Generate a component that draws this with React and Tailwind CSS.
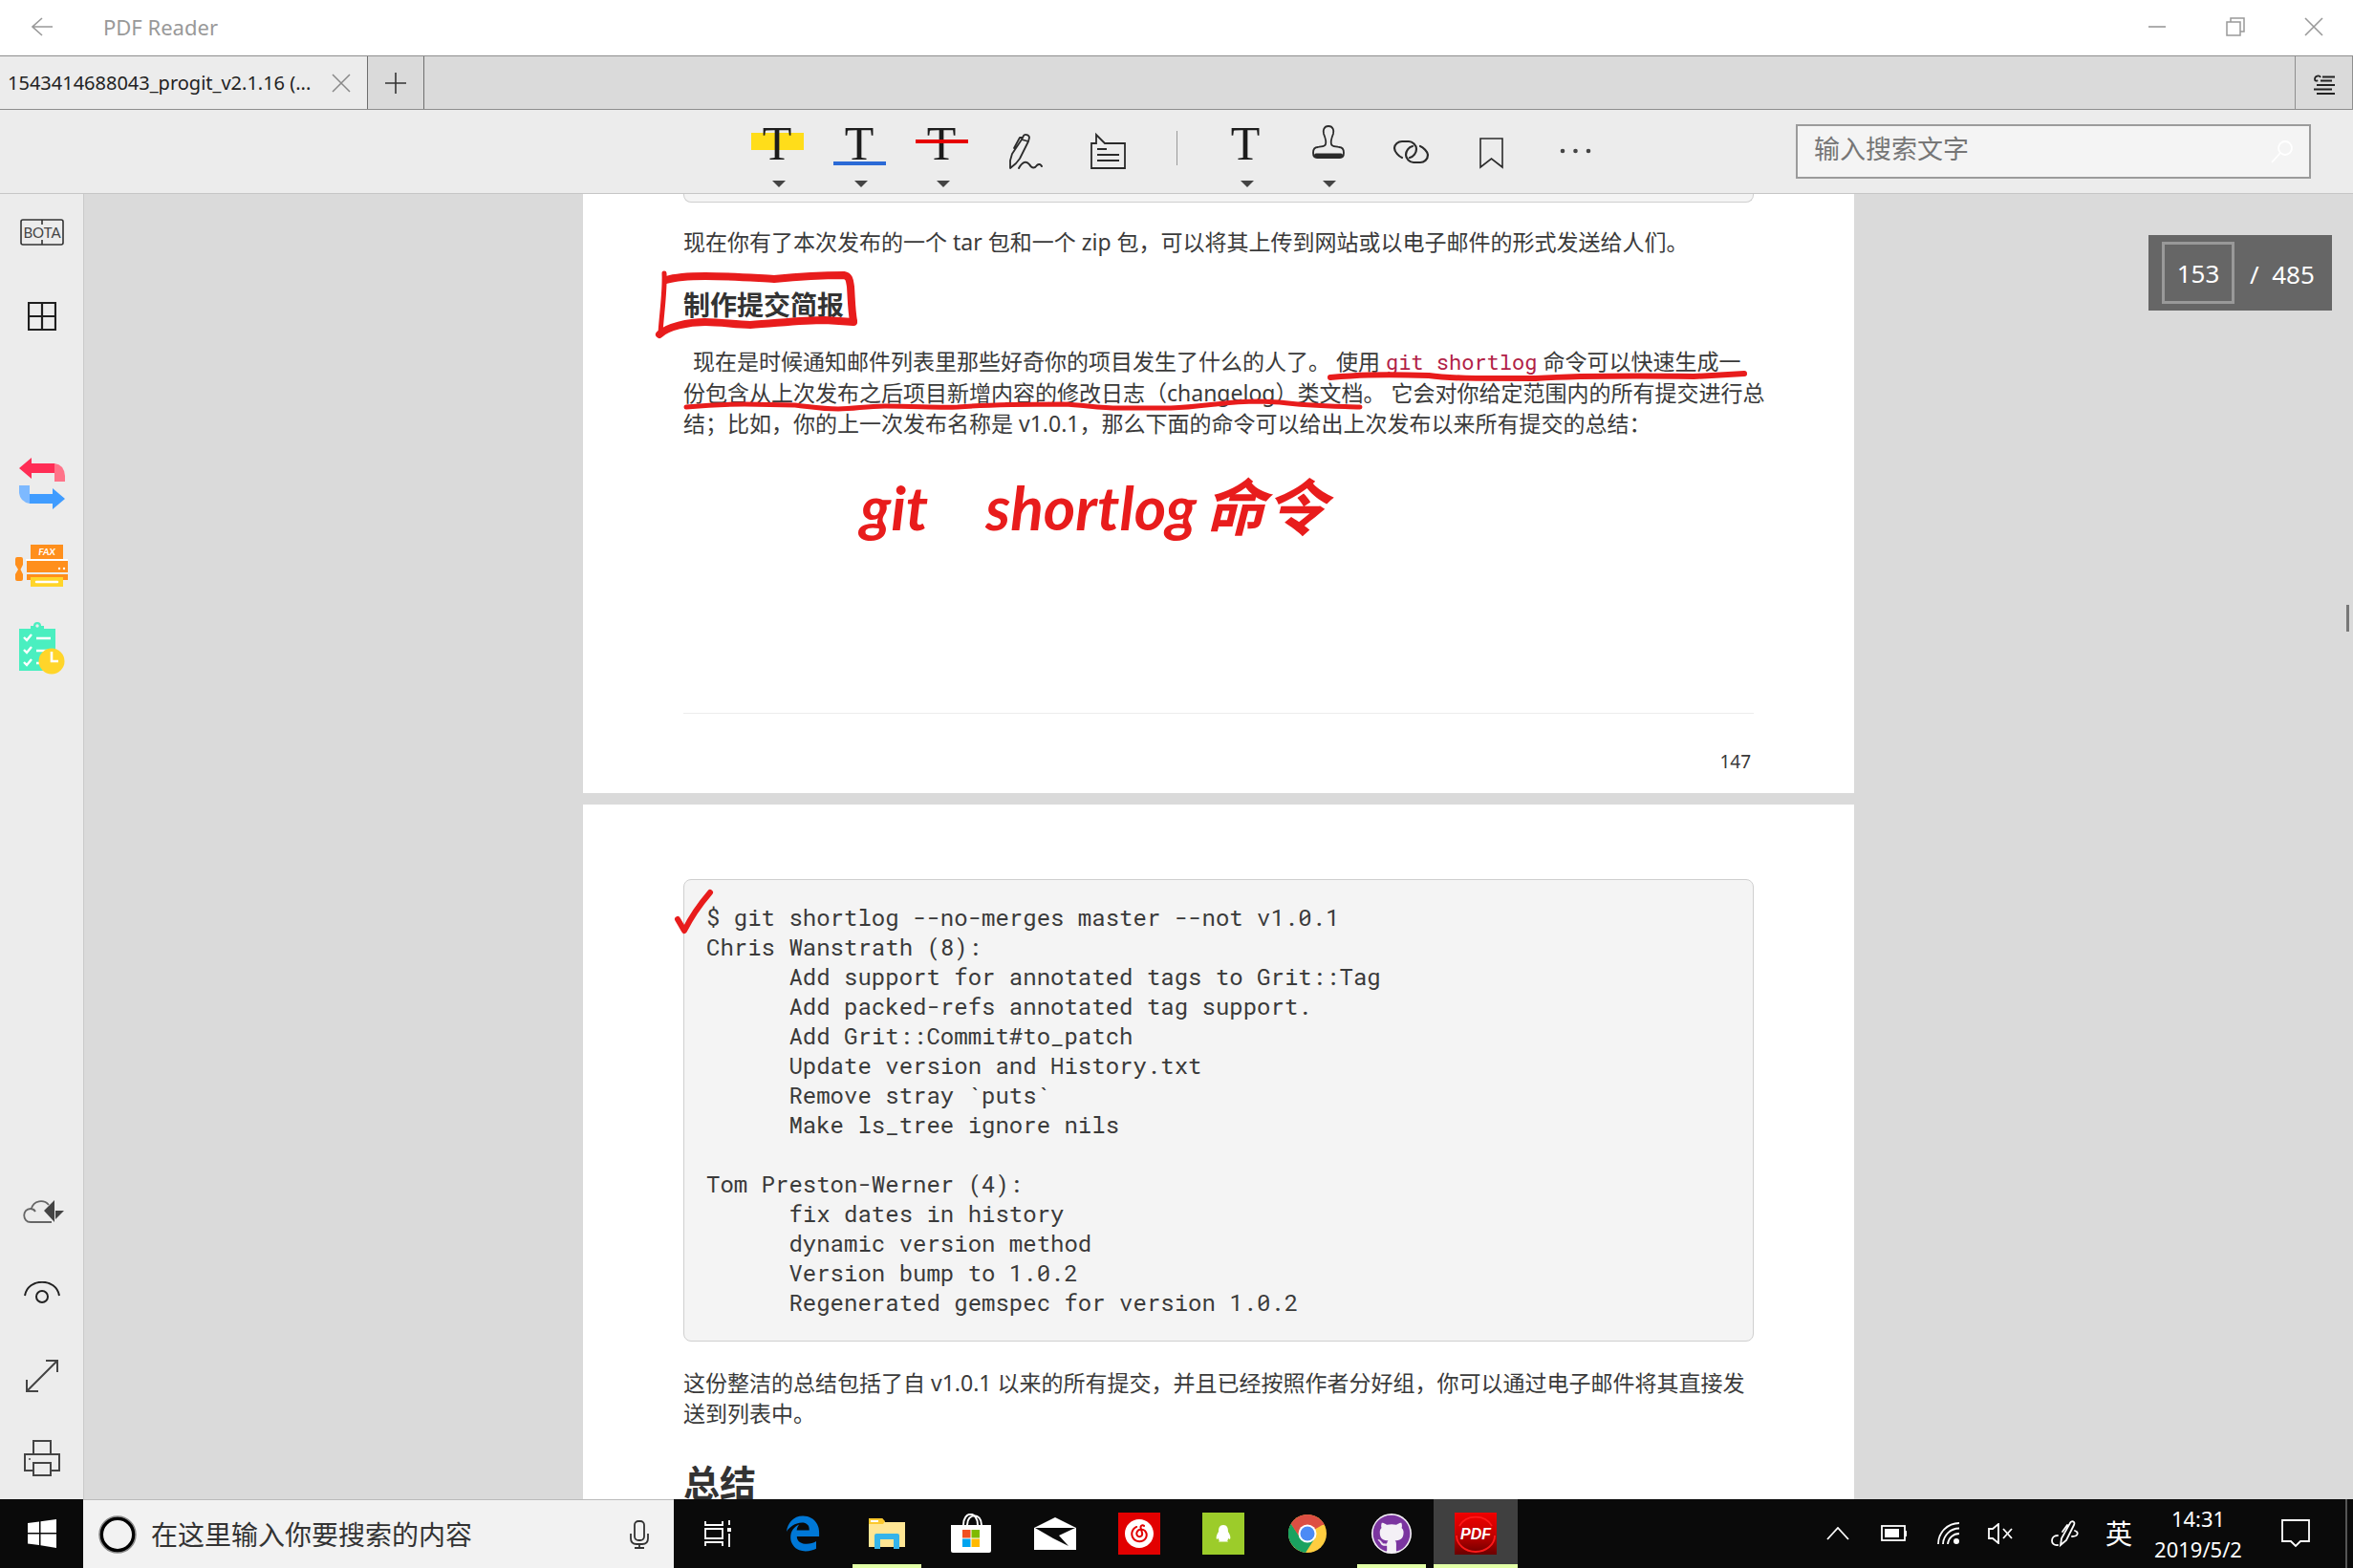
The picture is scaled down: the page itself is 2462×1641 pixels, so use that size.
import React from "react";
import { FaGithub } from "react-icons/fa";
import { FaEdgeLegacy } from "react-icons/fa6";
import { SiNeteasecloudmusic } from "react-icons/si";

const INK = "#e81c1c";

const shortlog = `$ git shortlog --no-merges master --not v1.0.1
Chris Wanstrath (8):
      Add support for annotated tags to Grit::Tag
      Add packed-refs annotated tag support.
      Add Grit::Commit#to_patch
      Update version and History.txt
      Remove stray \`puts\`
      Make ls_tree ignore nils

Tom Preston-Werner (4):
      fix dates in history
      dynamic version method
      Version bump to 1.0.2
      Regenerated gemspec for version 1.0.2`;

function TitleBar() {
  return (
    <header className="flex h-[59px] shrink-0 items-center border-b border-[#8e8e8e] bg-white pb-0.5 text-[#999]">
      <button aria-label="返回" className="flex h-full w-[88px] items-center justify-center">
        <svg width="22" height="20" viewBox="0 0 22 20" fill="none" stroke="currentColor" strokeWidth="1.6">
          <path d="M11 1 L1 10 L11 19 M1 10 H22" />
        </svg>
      </button>
      <h1 className="pl-5 text-[22px] leading-8">PDF Reader</h1>
      <div className="ml-auto flex h-full">
        <button aria-label="最小化" className="flex w-[82px] items-center justify-center">
          <svg width="20" height="20" viewBox="0 0 20 20" stroke="currentColor" strokeWidth="1.6"><path d="M1 10 H19" /></svg>
        </button>
        <button aria-label="还原" className="flex w-[82px] items-center justify-center">
          <svg width="20" height="20" viewBox="0 0 20 20" fill="none" stroke="currentColor" strokeWidth="1.5">
            <path d="M1 5 H15 V19 H1 Z M5 5 V1 H19 V15 H15" />
          </svg>
        </button>
        <button aria-label="关闭" className="flex w-[82px] items-center justify-center">
          <svg width="20" height="20" viewBox="0 0 20 20" stroke="currentColor" strokeWidth="1.6"><path d="M1 1 L19 19 M19 1 L1 19" /></svg>
        </button>
      </div>
    </header>
  );
}

function TabBar() {
  return (
    <div className="flex h-[56px] shrink-0 border-b border-[#8e8e8e] bg-[#dadada]">
      <div className="flex w-[385px] items-center justify-between border-r border-[#6e6e6e] bg-[#ececec] pl-2 pr-[17px]">
        <button className="whitespace-nowrap text-[20px] leading-7 text-[#222]">1543414688043_progit_v2.1.16 (...</button>
        <button aria-label="关闭标签页" className="text-[#888]">
          <svg width="20" height="20" viewBox="0 0 20 20" stroke="currentColor" strokeWidth="1.5"><path d="M1 1 L19 19 M19 1 L1 19" /></svg>
        </button>
      </div>
      <button aria-label="新标签页" className="flex w-[59px] items-center justify-center border-r border-[#6e6e6e] text-[#333]">
        <svg width="22" height="22" viewBox="0 0 22 22" stroke="currentColor" strokeWidth="1.6"><path d="M11 0 V22 M0 11 H22" /></svg>
      </button>
      <button aria-label="标签列表" className="ml-auto flex w-[61px] items-center justify-center border-x border-[#8e8e8e] pt-1 text-[#222]">
        <svg width="22" height="22" viewBox="0 0 22 22" fill="none" stroke="currentColor" strokeWidth="1.8">
          <path d="M9 2.500 H22 M7 6.500 H19 M3 11 H22 M0 15.500 H19 M3 20 H22" />
          <path d="M7 3 C6 0.500 1 1 1 5 C1 7 3 7 4 6" />
        </svg>
      </button>
    </div>
  );
}

function ToolButton({ label, caret, children }) {
  return (
    <button aria-label={label} className="h-full w-[86px]">
      <svg width="86" height="87" viewBox="0 0 86 87" fill="none" stroke="#2b2b2b" strokeWidth="2" strokeLinecap="round" strokeLinejoin="round">
        {children}
        {caret && <path d="M37 74 H51 L44 81 Z" fill="#444" stroke="none" />}
      </svg>
    </button>
  );
}

function SerifT() {
  return (
    <text x="42" y="52" textAnchor="middle" fontFamily="'Liberation Serif', serif" fontSize="50" fill="#1c1c1c" stroke="none">T</text>
  );
}

function Toolbar() {
  return (
    <div className="grid h-[88px] shrink-0 grid-cols-[1fr_auto_1fr] items-center border-b border-[#c6c6c6] bg-[#ececec]">
      <div />
      <div className="flex h-full items-center">
        <ToolButton label="高亮" caret>
          <rect x="15" y="24" width="55" height="18" fill="#ffdd1a" stroke="none" />
          <SerifT />
        </ToolButton>
        <ToolButton label="下划线" caret>
          <rect x="15" y="54" width="55" height="4" fill="#2b6ad6" stroke="none" />
          <SerifT />
        </ToolButton>
        <ToolButton label="删除线" caret>
          <SerifT />
          <rect x="15" y="31" width="55" height="4" fill="#e60000" stroke="none" />
        </ToolButton>
        <ToolButton label="墨迹">
          <path d="M28 61 L28 53 L30 46 L40 31 L47 33 L38 51 L34 56 Z M40 31 L42 27 C43 25 48 26 48 29 L47 33 M41 29 L38 29 L32 40" strokeWidth="1.8" />
          <path d="M37 61 C41 54 45 53 48 57 C51 62 54 61 56 58 C58 56 60 57 61 59" />
        </ToolButton>
        <ToolButton label="注释">
          <path d="M27 35 H32 V26 L41 35 H62 V61 H27 Z M33 41 H43 M33 47 H56 M33 53 H56" strokeWidth="1.8" strokeLinecap="butt" strokeLinejoin="miter" />
        </ToolButton>
        <div className="flex h-full w-[60px] justify-center pt-[22px]"><div className="h-9 w-px bg-[#999]" /></div>
        <ToolButton label="添加文本" caret><SerifT /></ToolButton>
        <ToolButton label="图章" caret>
          <path d="M43 17 C38 17 37 22 38 25 C40 30 41 33 40 36 C39 39 36 38 32 39 C28 39 27 42 27 45 C27 48 28 50 31 50 H55 C58 50 59 48 59 45 C59 42 58 39 54 39 C50 38 47 39 46 36 C45 33 46 30 48 25 C49 22 48 17 43 17 Z" strokeWidth="1.800" />
          <path d="M30 47.500 H56" strokeWidth="4" />
        </ToolButton>
        <ToolButton label="链接">
          <path d="M34 50 C31 49 26 44 26 40 C26 36 30 33 34 33 H41 C45 33 49 37 49 41 C49 45 46 49 42 50" strokeWidth="2.200" />
          <path d="M53 38 C56 39 61 44 61 47 C61 52 57 55 53 55 H46 C42 55 38 51 38 47 C38 43 41 39 45 38" strokeWidth="2.200" />
        </ToolButton>
        <ToolButton label="书签">
          <path d="M30 30 H53 V60 L41.500 51 L30 60 Z" strokeWidth="1.600" strokeLinejoin="miter" />
        </ToolButton>
        <ToolButton label="更多">
          <g fill="#444" stroke="none"><circle cx="30" cy="43" r="2.300" /><circle cx="43.500" cy="43" r="2.300" /><circle cx="57" cy="43" r="2.300" /></g>
        </ToolButton>
      </div>
      <div className="flex justify-end pr-11">
        <div className="flex h-[57px] w-[539px] items-center border-2 border-[#9b9b9b] bg-[#f4f4f4] pl-[17px] pr-4">
          <input type="search" aria-label="输入搜索文字" placeholder="输入搜索文字" className="min-w-0 flex-1 bg-transparent pb-1.5 text-[27px] leading-9 outline-none placeholder:text-[#767676]" />
          <button aria-label="搜索">
            <svg width="24" height="24" viewBox="0 0 24 24" fill="none" stroke="#fff" strokeWidth="1.8"><circle cx="15" cy="8" r="7" /><path d="M10 13 L1 23" /></svg>
          </button>
        </div>
      </div>
    </div>
  );
}

function SideButton({ label, children }) {
  return (
    <button aria-label={label} className="flex h-14 w-full items-center justify-center text-[#2b2b2b]">{children}</button>
  );
}

function Sidebar() {
  return (
    <nav className="flex w-[88px] shrink-0 flex-col justify-between border-r border-[#cacaca] bg-[#ececec] pb-[15px] pt-3">
      <div>
        <div className="flex flex-col gap-8">
          <SideButton label="BOTA">
            <svg width="46" height="28" viewBox="0 0 46 28" fill="none" stroke="#333" strokeWidth="1.6">
              <rect x="1" y="1" width="44" height="26" rx="2" />
              <path d="M23 1 V6 M23 22 V27" />
              <text x="23" y="20" textAnchor="middle" fontFamily="Lato, sans-serif" fontSize="15" fill="#444" stroke="none">BOTA</text>
            </svg>
          </SideButton>
          <SideButton label="缩略图">
            <svg width="30" height="30" viewBox="0 0 30 30" fill="none" stroke="#1f1f1f" strokeWidth="2.2">
              <path d="M1 1 H29 V29 H1 Z M15 1 V29 M1 15 H29" />
            </svg>
          </SideButton>
        </div>
        <div className="mt-[119px] flex flex-col gap-[30px]">
          <SideButton label="转换">
            <svg width="48" height="56" viewBox="0 0 48 56">
              <path d="M0 12 L13 1 V7 H37 L40 17 H13 V23 Z" fill="#ff2d55" />
              <path d="M37 7 Q47 8 48 20 V26 H37 Z" fill="#ff7389" />
              <path d="M48 44 L35 55 V49 H11 L8 39 H35 V33 Z" fill="#409cff" />
              <path d="M0 30 H11 V49 Q1 47 0 38 Z" fill="#7db9ff" />
            </svg>
          </SideButton>
          <SideButton label="传真">
            <svg width="56" height="44" viewBox="0 0 56 44" fill="#ff8f1c">
              <rect x="16" y="0" width="34" height="15" />
              <text x="33" y="11" textAnchor="middle" fontFamily="Lato, sans-serif" fontSize="10" fontWeight="700" fontStyle="italic" fill="#fff">FAX</text>
              <rect x="11" y="15" width="44" height="2" fill="#fff" />
              <rect x="12" y="17" width="43" height="12" />
              <circle cx="46" cy="25" r="1.200" fill="#fff" /><circle cx="51" cy="25" r="1.200" fill="#fff" />
              <rect x="12" y="31" width="43" height="6" />
              <rect x="16" y="34" width="34" height="10" fill="#ffd52a" />
              <path d="M22 39 H44" stroke="#fff" strokeWidth="2.500" strokeLinecap="round" />
              <path d="M0 15 Q0 13 2 13 H6 Q8 13 8 15 V21 L5.500 26 L8 31 V36 Q8 38 6 38 H2 Q0 38 0 36 V31 L3 26 L0 21 Z" />
            </svg>
          </SideButton>
          <SideButton label="任务">
            <svg width="48" height="56" viewBox="0 0 48 56" fill="none">
              <path d="M0 8 H12 V5 H15 A4 4 0 0 1 23 5 H26 V8 H38 V52 H0 Z" fill="#4aefc0" />
              <circle cx="19" cy="5" r="1.700" fill="#ececec" />
              <path d="M5 17 L8 20 L13 14 M5 30 L8 33 L13 27 M5 43 L8 46 L13 40 M18 18 H33 M18 31 H30 M18 44 H24" stroke="#fff" strokeWidth="2.400" />
              <circle cx="34" cy="42" r="13.500" fill="#ffd52a" />
              <path d="M34 32 V42 H41" stroke="#fff" strokeWidth="2.600" />
            </svg>
          </SideButton>
        </div>
      </div>
      <div className="flex flex-col gap-[30px]">
        <SideButton label="云同步">
          <svg width="48" height="26" viewBox="-4 0 48 26" fill="none" stroke="#666" strokeWidth="1.800">
            <path d="M30 24 H8 C-1 24 -1 10 8 10 C10 10 12 11 13 13 M9 10 C11 1 22 0 27 6" />
            <path d="M22 12 L33 1 V24 Z M34 12 H43 L34 21 Z" fill="#444" stroke="none" />
          </svg>
        </SideButton>
        <SideButton label="阅读模式">
          <svg width="38" height="26" viewBox="0 0 38 26" fill="none" stroke="#222" strokeWidth="2">
            <path d="M1 15 C4 -4 34 -4 37 15" />
            <circle cx="19" cy="16" r="6" />
          </svg>
        </SideButton>
        <SideButton label="全屏">
          <svg width="34" height="34" viewBox="0 0 34 34" fill="none" stroke="#444" strokeWidth="2">
            <path d="M2 32 L32 2 M21 1 H33 V13 M1 21 V33 H13" />
          </svg>
        </SideButton>
        <SideButton label="打印">
          <svg width="38" height="38" viewBox="0 0 38 38" fill="none" stroke="#444" strokeWidth="2">
            <path d="M10 15 V1 H28 V15 M10 32 H1 V15 H37 V32 H28 M10 24 H28 V37 H10 Z" />
            <circle cx="6" cy="20" r="1" fill="#444" stroke="none" />
          </svg>
        </SideButton>
      </div>
    </nav>
  );
}

function PageOne() {
  return (
    <article className="relative w-full max-w-[1330px] bg-white px-[105px] pb-[17px]">
      <div className="h-[9px] rounded-b-lg border-x border-b border-[#cfcfcf] bg-[#f4f4f4]" />
      <p className="mt-[25px] whitespace-nowrap">现在你有了本次发布的一个 tar 包和一个 zip 包，可以将其上传到网站或以电子邮件的形式发送给人们。</p>
      <h2 className="mt-[30px] text-[28px] font-bold leading-10 text-[#333]">制作提交简报</h2>
      <p className="mt-[23px] whitespace-nowrap indent-[10px]">
        现在是时候通知邮件列表里那些好奇你的项目发生了什么的人了。 使用 <code className="font-['Roboto_Mono','DejaVu_Sans_Mono',monospace] text-[22px] text-[#b12146]">git shortlog</code> 命令可以快速生成一
        <br />
        份包含从上次发布之后项目新增内容的修改日志（changelog）类文档。 它会对你给定范围内的所有提交进行总
        <br />
        结；比如，你的上一次发布名称是 v1.0.1，那么下面的命令可以给出上次发布以来所有提交的总结：
      </p>
      <footer className="mt-[287px] border-t border-[#ededed] pr-[3px] pt-[34px] text-right text-[19px]">147</footer>
      <svg className="pointer-events-none absolute left-0 top-0" width="1330" height="626" viewBox="610 203 1330 626" fill="none" stroke={INK} strokeLinecap="round" strokeLinejoin="round">
        <path d="M695 286 C696 305 692 330 691 349" strokeWidth="5" />
        <path d="M690 350 C698 342 720 337 738 337 C755 337 770 340 785 340 C815 338 840 335 863 335 L893 337" strokeWidth="8" />
        <path d="M697 293 C710 289 725 289 738 289 C765 289 790 291 810 292 C830 290 860 288 883 288 C889 289 889 294 890 300 C891 315 891 325 893 336" strokeWidth="8" />
        <path d="M1392 395 C1415 393 1440 391 1495 393 C1515 396 1540 396 1607 396 C1640 394 1700 393 1772 394 L1825 391" strokeWidth="6" />
        <path d="M718 426 C740 424 760 423 779 423 L832 424 C850 426 860 428 877 428 C895 428 905 425 926 425 C960 425 980 427 1002 426 C1040 423 1080 423 1113 423 C1135 424 1150 427 1171 427 H1225 C1260 426 1280 420 1317 420 L1339 421 C1370 425 1395 425 1423 426" strokeWidth="5" />
      </svg>
      <div className="pointer-events-none absolute left-[290px] top-[280px] flex items-baseline whitespace-nowrap font-['Lato','Noto_Sans_CJK_SC',sans-serif] text-[64px] font-bold italic leading-[96px] text-[#e81c1c]">
        <span className="pr-[60px]">git</span>
        <span className="pr-2">shortlog</span>
        <span>命令</span>
      </div>
    </article>
  );
}

function PageTwo() {
  return (
    <article className="relative w-full max-w-[1330px] bg-white px-[105px] pt-[78px]">
      <pre className="rounded-lg border border-[#cfcfcf] bg-[#f4f4f4] p-6 pl-[23px] font-['Roboto_Mono','DejaVu_Sans_Mono',monospace] text-[24px] leading-[31px] text-[#3a3a3a]">{shortlog}</pre>
      <svg className="pointer-events-none absolute left-[94px] top-[84px]" width="46" height="56" viewBox="704 926 46 56" fill="none" stroke={INK} strokeWidth="6" strokeLinecap="round" strokeLinejoin="round">
        <path d="M709 962 L716 974 C723 960 731 948 743 934" />
      </svg>
      <p className="mt-[27px] whitespace-nowrap">
        这份整洁的总结包括了自 v1.0.1 以来的所有提交，并且已经按照作者分好组，你可以通过电子邮件将其直接发
        <br />
        送到列表中。
      </p>
      <h1 className="mt-7 text-[38px] font-bold leading-[56px] text-[#333]">总结</h1>
    </article>
  );
}

function Viewer() {
  return (
    <main className="relative min-w-0 flex-1 overflow-hidden bg-[#dadada]">
      <div className="flex flex-col items-center gap-3 text-[23px] leading-8 text-[#3a3a3a]">
        <PageOne />
        <PageTwo />
      </div>
      <div className="absolute right-[22px] top-[43px] flex h-[79px] w-[192px] items-center bg-[#666] pl-[14px] text-[26px] text-white">
        <input aria-label="页码" defaultValue="153" className="h-[65px] w-[76px] border-[3px] border-[#999] bg-transparent text-center outline-none" />
        <span className="whitespace-pre pl-4 pt-1">/  485</span>
      </div>
      <div className="absolute right-1 top-[430px] h-7 w-[3px] bg-[#777]" />
    </main>
  );
}

function TaskButton({ label, running, active, wide, children }) {
  return (
    <button
      aria-label={label}
      className={`relative flex h-full items-center justify-center ${wide ? "w-[91px]" : "w-[88px]"} ${active ? "bg-[#404040]" : ""}`}
    >
      {children}
      {running && <span className={`absolute bottom-0 h-1 bg-[#e2ffa6] ${active ? "inset-x-0" : "inset-x-2"}`} />}
    </button>
  );
}

function Taskbar() {
  return (
    <footer className="flex h-[72px] shrink-0 items-stretch bg-[#0a0a0a] text-white">
      <button aria-label="开始" className="flex w-[87px] items-center justify-center">
        <svg width="30" height="30" viewBox="0 0 30 30" fill="#fff">
          <path d="M0 4 L12 2.500 V14 H0 Z M13.500 2.300 L30 0 V14 H13.500 Z M0 15.500 H12 V27 L0 25.500 Z M13.500 15.500 H30 V30 L13.500 27.300 Z" />
        </svg>
      </button>
      <div className="flex w-[618px] items-center border-t border-[#bbb] bg-[#f2f2f2] pl-4 pr-[26px]">
        <svg width="40" height="40" viewBox="0 0 40 40" fill="none" stroke="#000"><circle cx="20" cy="20" r="17" strokeWidth="4" /><circle cx="20" cy="20" r="19" strokeWidth="1.500" stroke="#888" /></svg>
        <input aria-label="在这里输入你要搜索的内容" placeholder="在这里输入你要搜索的内容" className="ml-[15px] min-w-0 flex-1 bg-transparent text-[28px] leading-10 outline-none placeholder:text-[#333]" />
        <button aria-label="语音">
          <svg width="20" height="30" viewBox="0 0 20 30" fill="none" stroke="#333" strokeWidth="1.800">
            <rect x="5" y="1" width="10" height="20" rx="4" />
            <path d="M1 14 V19 Q1 25 7 25 H13 Q19 25 19 19 V14 M10 25 V29 M5 29 H15" />
          </svg>
        </button>
      </div>
      <TaskButton label="任务视图" wide>
        <svg width="28" height="28" viewBox="0 0 28 28" fill="none" stroke="#fff" strokeWidth="1.800">
          <path d="M1 1 V5 H19 V1 M1 27 V23 H19 V27 M1 9 H19 V19 H1 Z M26 0 V5 M26 14 V28" />
          <rect x="24" y="8" width="4" height="4" fill="#fff" stroke="none" />
        </svg>
      </TaskButton>
      <TaskButton label="Microsoft Edge"><FaEdgeLegacy size={38} color="#0078d7" /></TaskButton>
      <TaskButton label="文件资源管理器" running>
        <svg width="38" height="34" viewBox="0 0 38 34">
          <path d="M0 1 H14 L17 5 H38 V31 H0 Z" fill="#ffe694" />
          <path d="M0 1 H14 L17 4 L15 7 H0 Z" fill="#fbc82e" />
          <rect x="2" y="3" width="8" height="2" fill="#fff" />
          <path d="M6 33 V19 Q6 17 8 17 H30 Q32 17 32 19 V33 H26 V23 H12 V33 Z" fill="#35b4ea" />
        </svg>
      </TaskButton>
      <TaskButton label="Microsoft Store">
        <svg width="42" height="42" viewBox="0 0 42 42">
          <path d="M13 12 C13 -3 28 -3 28 12 M17 12 C17 -1 32 -1 32 12" fill="none" stroke="#fff" strokeWidth="2" />
          <path d="M0 12 H42 V39 Q42 41 40 41 H2 Q0 41 0 39 Z" fill="#fff" />
          <rect x="12" y="17" width="8.500" height="8.500" fill="#f25022" /><rect x="21.500" y="17" width="8.500" height="8.500" fill="#7fba00" />
          <rect x="12" y="26.500" width="8.500" height="8.500" fill="#00a4ef" /><rect x="21.500" y="26.500" width="8.500" height="8.500" fill="#ffb900" />
        </svg>
      </TaskButton>
      <TaskButton label="邮件">
        <svg width="44" height="34" viewBox="0 0 44 34">
          <path d="M0 11 L22 0 L44 11 V34 H0 Z" fill="#fff" />
          <path d="M1 11 H43 L26 19 L36 30 L20 22 Z" fill="#0a0a0a" />
        </svg>
      </TaskButton>
      <TaskButton label="网易云音乐">
        <span className="flex h-11 w-11 items-center justify-center bg-[#e20000]"><SiNeteasecloudmusic size={30} color="#fff" /></span>
      </TaskButton>
      <TaskButton label="QQ">
        <svg width="44" height="44" viewBox="0 0 44 44">
          <rect width="44" height="44" fill="#9ccc2a" />
          <path d="M22 13 C18 13 17 16 17 20 C15 23 14 26 15 28 L17 27 C17 28 17 29 18 29 L17 30.500 H27 L26 29 C27 29 27 28 27 27 L29 28 C30 26 29 23 27 20 C27 16 26 13 22 13 Z" fill="#fff" />
        </svg>
      </TaskButton>
      <TaskButton label="Chrome">
        <svg width="42" height="42" viewBox="0 0 42 42">
          <circle cx="21" cy="21" r="20" fill="#ffcd40" />
          <path d="M21 21 L3.700 11 A20 20 0 0 1 38.300 11 Z" fill="#dd4f43" />
          <path d="M12 11 H38.300 L38.500 12 H21 Z" fill="#dd4f43" />
          <path d="M3.700 11 A20 20 0 0 0 19 40.900 L29 25.500 L21 21 L13.200 25.500 Z" fill="#1aa260" />
          <path d="M3.700 11 L13.500 26 L21 21 V12 L12 6 Z" fill="#dd4f43" />
          <path d="M3.700 11 A20 20 0 0 0 4 31 L13.500 26 Z" fill="#1aa260" />
          <circle cx="21" cy="21" r="9.500" fill="#fff" /><circle cx="21" cy="21" r="7.500" fill="#4c8bf5" />
        </svg>
      </TaskButton>
      <TaskButton label="GitHub Desktop" running>
        <span className="flex h-[42px] w-[42px] items-center justify-center rounded-full bg-[#f4f0f6]"><FaGithub size={40} color="#7b35a0" /></span>
      </TaskButton>
      <TaskButton label="PDF Reader" running active>
        <svg width="44" height="44" viewBox="0 0 44 44">
          <defs><linearGradient id="pdf" x1="0" y1="0" x2="0" y2="1"><stop offset="0" stopColor="#f00000" /><stop offset="0.500" stopColor="#c80000" /><stop offset="1" stopColor="#6a0000" /></linearGradient></defs>
          <rect width="44" height="44" fill="url(#pdf)" />
          <path d="M5 14 A19 17 0 0 1 39 14 M2 24 A20 17 0 0 0 42 24" fill="none" stroke="#ff1a1a" strokeWidth="1.800" />
          <text x="22" y="28" textAnchor="middle" fontFamily="'Liberation Sans', sans-serif" fontSize="16" fontWeight="700" fontStyle="italic" fill="#fff">PDF</text>
        </svg>
      </TaskButton>

      <div className="ml-auto flex items-stretch">
        <button aria-label="显示隐藏的图标" className="flex w-[58px] items-center justify-center">
          <svg width="24" height="14" viewBox="0 0 24 14" fill="none" stroke="#fff" strokeWidth="1.800"><path d="M1 13 L12 1 L23 13" /></svg>
        </button>
        <button aria-label="电池" className="flex w-[60px] items-center justify-center">
          <svg width="28" height="18" viewBox="0 0 28 18"><rect x="1" y="1" width="24" height="15" fill="none" stroke="#fff" strokeWidth="1.800" /><rect x="4" y="4" width="15" height="9" fill="#fff" /><rect x="25" y="6" width="2" height="6" fill="#fff" /></svg>
        </button>
        <button aria-label="网络" className="flex w-[54px] items-center justify-center">
          <svg width="24" height="24" viewBox="0 0 24 24" fill="none" stroke="#fff" strokeWidth="1.800">
            <path d="M1 23 A22 22 0 0 1 23 1 M6 23 A17 17 0 0 1 23 6.500 M11 23 A12 12 0 0 1 23 12" /><circle cx="20" cy="20" r="3" fill="#fff" stroke="none" />
          </svg>
        </button>
        <button aria-label="音量" className="mr-4 flex w-[54px] items-center justify-center">
          <svg width="26" height="22" viewBox="0 0 26 22" fill="none" stroke="#fff" strokeWidth="1.800"><path d="M1 6 H5 L11 1 V21 L5 16 H1 Z M16 6 L25 16 M25 6 L16 16" /></svg>
        </button>
        <button aria-label="Windows Ink" className="flex w-12 items-center justify-center">
          <svg width="30" height="30" viewBox="0 0 30 30" fill="none" stroke="#fff" strokeWidth="1.800" strokeLinecap="round">
            <path d="M11 27 L12 20 L21 4 C22 1 27 2 25 6 L17 22 Z M18 6 L13 13 M8 17 C0 17 0 28 8 27 M26 12 C30 13 30 18 23 18" />
          </svg>
        </button>
        <button className="w-[66px] text-[28px]">英</button>
        <button className="w-[100px] whitespace-nowrap text-[22px] leading-8">14:31<br />2019/5/2</button>
        <button aria-label="通知" className="flex w-[104px] items-center justify-center">
          <svg width="30" height="30" viewBox="0 0 30 30" fill="none" stroke="#fff" strokeWidth="1.800"><path d="M1 1 H29 V23 H20 L15 28 L10 23 H1 Z" /></svg>
        </button>
        <button aria-label="显示桌面" className="w-2 border-l-2 border-[#555]" />
      </div>
    </footer>
  );
}

export default function App() {
  return (
    <div className="flex h-screen flex-col overflow-hidden font-['Noto_Sans','Noto_Sans_CJK_SC',sans-serif]" lang="zh-CN">
      <TitleBar />
      <TabBar />
      <Toolbar />
      <div className="flex min-h-0 flex-1">
        <Sidebar />
        <Viewer />
      </div>
      <Taskbar />
    </div>
  );
}
